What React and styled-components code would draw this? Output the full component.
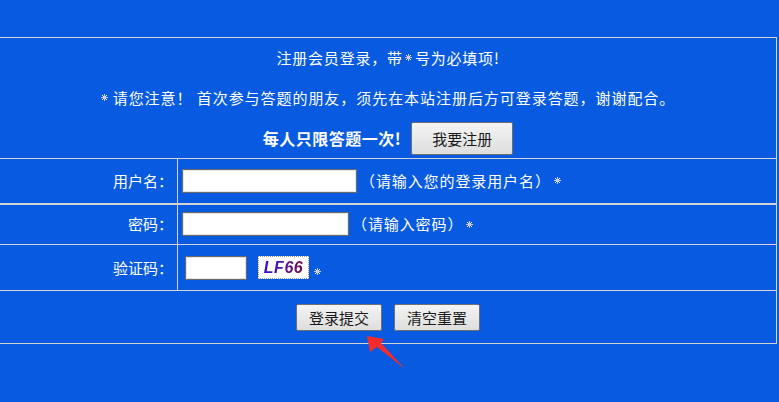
import React from 'react'
import styled, { createGlobalStyle } from 'styled-components'

const GlobalStyle = createGlobalStyle`
  html, body {
    margin: 0;
    padding: 0;
    background: #085be0;
  }
  body {
    font-family: "Noto Sans CJK SC", "Liberation Sans", sans-serif;
    font-size: 15px;
    color: #fff;
  }
`

const Page = styled.div`
  position: relative;
  width: 779px;
  height: 402px;
  padding-top: 37px;
  box-sizing: border-box;
  overflow: hidden;
`

const Table = styled.table`
  width: 777px;
  border-collapse: collapse;
  border-spacing: 0;
  border: 1px solid #d4d4d4;
  border-left: none;
`

const Row = styled.tr`
  height: ${p => p.$h}px;
`

const Cell = styled.td`
  padding: 0;
  border-top: ${p => p.$thick ? 2 : 1}px solid #d4d4d4;
  border-bottom: 1px solid #d4d4d4;
  vertical-align: middle;
  line-height: 20px;
  white-space: nowrap;
`

const LabelCell = styled(Cell)`
  width: 173px;
  text-align: right;
  padding-right: 4px;
  border-right: 1px solid #d4d4d4;
`

const FieldCell = styled(Cell)`
  padding-left: ${p => p.$pad || 4}px;
`

const CenterCell = styled(Cell)`
  text-align: center;
`

const Notice = styled.div`
  display: flex;
  justify-content: center;
  align-items: center;
  height: 40px;
  letter-spacing: ${p => p.$ls || 0}px;
`

const StarSvg = styled.svg`
  display: inline-block;
  margin: 0 ${p => p.$mr ?? 3}px 0 ${p => p.$ml ?? 3}px;
  vertical-align: middle;
  transform: translateY(${p => p.$dy ?? -1}px);
`

const Star = (props) => (
  <StarSvg width="7" height="7" viewBox="0 0 7 7" {...props}>
    <g stroke="#b8d4ff" strokeWidth="1">
      <line x1="3.5" y1="0" x2="3.5" y2="7" />
      <line x1="0" y1="3.5" x2="7" y2="3.5" />
    </g>
    <g stroke="#ffffff" strokeWidth="1">
      <line x1="1" y1="1" x2="6" y2="6" />
      <line x1="6" y1="1" x2="1" y2="6" />
    </g>
    <rect x="2.5" y="2.5" width="2" height="2" fill="#f0a8e8" />
  </StarSvg>
)

const Strong = styled.span`
  font-size: 16px;
  font-weight: bold;
  letter-spacing: 0.5px;
`

const Button = styled.button`
  font-family: "Noto Sans CJK SC", "Liberation Sans", sans-serif;
  font-size: 15px;
  color: #1a1a1a;
  width: ${p => p.$w}px;
  height: ${p => p.$hh}px;
  padding: 0;
  border: 1px solid #707070;
  border-radius: 2px;
  background: linear-gradient(#f4f4f4, #dedede);
  cursor: pointer;
`

const Input = styled.input`
  box-sizing: border-box;
  width: ${p => p.$w}px;
  height: 24px;
  margin: 0 ${p => p.$mr ?? 3}px 0 0;
  border: 1px solid #6a6a6a;
  box-shadow: inset 0 0 0 1px #e6e6e6;
  background: #fff;
  vertical-align: middle;
`

const Hint = styled.span`
  vertical-align: middle;
  letter-spacing: 0.9px;
`

const Captcha = styled.span`
  display: inline-flex;
  align-items: center;
  justify-content: center;
  box-sizing: border-box;
  width: 51px;
  height: 23px;
  margin-left: 8px;
  background: #fff;
  border: 1px dotted #999;
  vertical-align: middle;
`

const CaptchaText = styled.span`
  font-family: "Liberation Sans", Arial, sans-serif;
  font-size: 16px;
  font-weight: bold;
  font-style: italic;
  letter-spacing: 0.5px;
  background: linear-gradient(90deg, #2a10d0, #5a10a0 50%, #7a0a40);
  -webkit-background-clip: text;
  background-clip: text;
  color: transparent;
`

const ButtonRow = styled.div`
  display: flex;
  justify-content: center;
  gap: 12px;
  padding-top: 1px;
`

const HeadLine = styled.div`
  display: flex;
  justify-content: center;
  align-items: center;
  gap: 10px;
  height: 40px;
`

const Arrow = styled.svg`
  position: absolute;
  left: 0;
  top: 0;
  pointer-events: none;
`

export default function App() {
  return (
    <Page>
      <GlobalStyle />
      <Table>
        <tbody>
          <Row $h={121}>
            <CenterCell colSpan={2}>
              <Notice $ls={0.8}>注册会员登录，带<Star $ml={2} $mr={3} />号为必填项!</Notice>
              <Notice $ls={0.95}><Star $ml={0} $mr={5} />请您注意！ 首次参与答题的朋友，须先在本站注册后方可登录答题，谢谢配合。</Notice>
              <HeadLine>
                <Strong>每人只限答题一次!</Strong>
                <Button $w={102} $hh={33}>我要注册</Button>
              </HeadLine>
            </CenterCell>
          </Row>
          <Row $h={45}>
            <LabelCell>用户名：</LabelCell>
            <FieldCell>
              <Input $w={175} type="text" />
              <Hint>（请输入您的登录用户名）</Hint>
              <Star $ml={3} $dy={0} />
            </FieldCell>
          </Row>
          <Row $h={41}>
            <LabelCell $thick>密码：</LabelCell>
            <FieldCell $thick>
              <Input $w={167} type="password" />
              <Hint>（请输入密码）</Hint>
              <Star $ml={3} $dy={0} />
            </FieldCell>
          </Row>
          <Row $h={46}>
            <LabelCell>验证码：</LabelCell>
            <FieldCell $pad={7}>
              <Input $w={62} $mr={3} type="text" />
              <Captcha><CaptchaText>LF66</CaptchaText></Captcha>
              <Star $ml={5} $mr={0} $dy={4} />
            </FieldCell>
          </Row>
          <Row $h={53}>
            <CenterCell colSpan={2}>
              <ButtonRow>
                <Button $w={86} $hh={27}>登录提交</Button>
                <Button $w={86} $hh={27}>清空重置</Button>
              </ButtonRow>
            </CenterCell>
          </Row>
        </tbody>
      </Table>
      <Arrow width="779" height="402" viewBox="0 0 779 402">
        <polygon
          points="367,336 384,339 381,343 405,369 377,347 370,352"
          fill="#f52a2a"
        />
      </Arrow>
    </Page>
  )
}
